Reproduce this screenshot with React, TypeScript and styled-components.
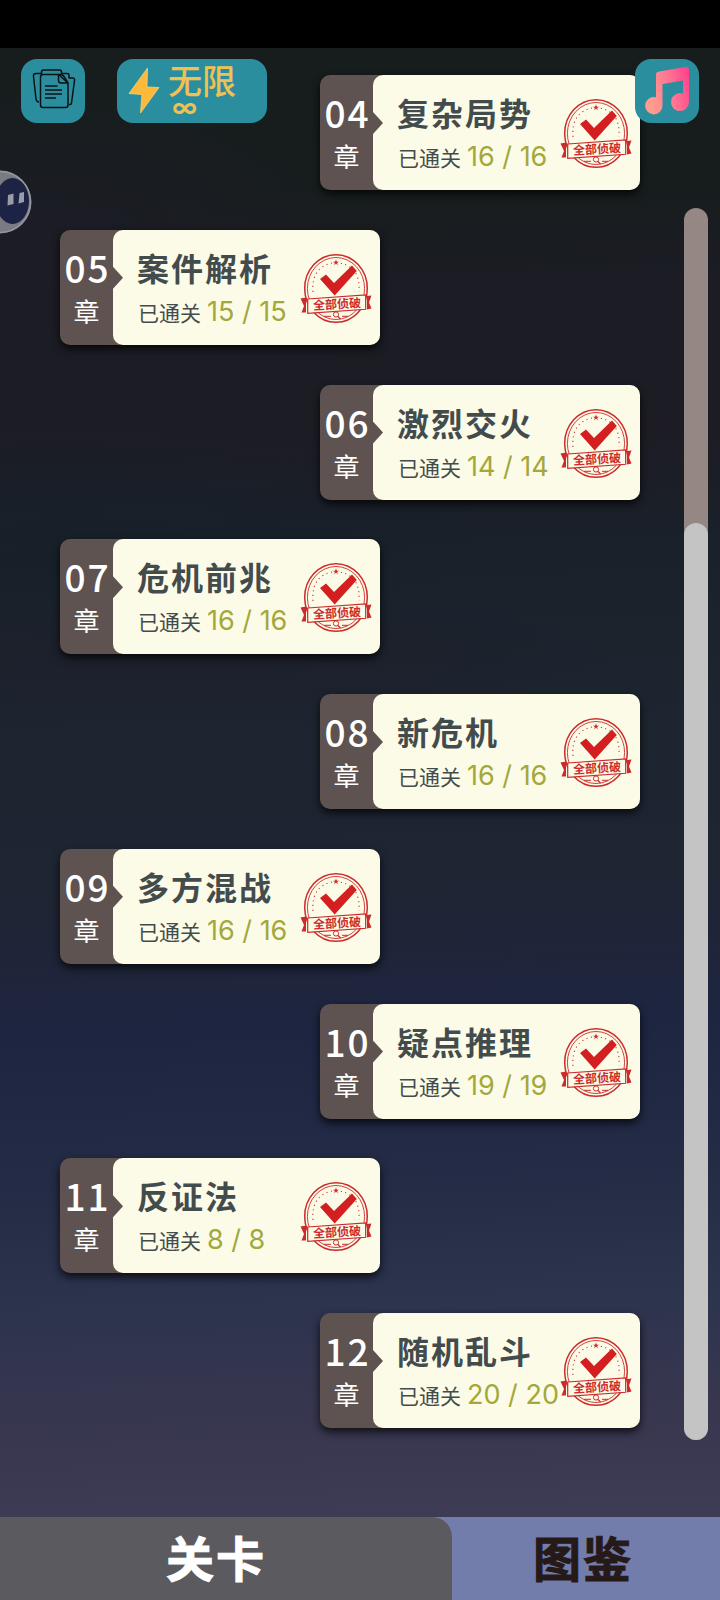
import React from "react";
import styled, { createGlobalStyle } from "styled-components";

const CJK = `"Noto Sans CJK SC", "Noto Sans", sans-serif`;

const GlobalStyle = createGlobalStyle`
  *, *::before, *::after { box-sizing: border-box; }
  html, body { margin: 0; padding: 0; background: #161d1c; }
  button { margin: 0; padding: 0; border: 0; font: inherit; color: inherit; cursor: pointer; }
`;

const Screen = styled.div`
  position: relative;
  display: flex;
  flex-direction: column;
  min-height: 100vh;
  font-family: ${CJK};
  background:
    radial-gradient(ellipse 50% 10% at 5% 14%, rgba(29, 28, 39, 0.8), transparent),
    radial-gradient(ellipse 60% 7% at 10% 33%, rgba(22, 32, 41, 0.8), transparent),
    radial-gradient(ellipse 60% 4% at 25% 41%, rgba(32, 28, 42, 0.5), transparent),
    linear-gradient(
      178deg,
      #161d1c 0%,
      #161d1c 12%,
      #1b1c24 18%,
      #1d1c25 28%,
      #19212a 35%,
      #1d2530 46%,
      #1f2534 56%,
      #1e2541 64%,
      #242c46 74%,
      #2d344e 81%,
      #37364f 87%,
      #3e3b54 94%,
      #3e3b54 100%
    );
`;

const StatusBar = styled.div`
  height: 48px;
  background: #000;
`;

const Toolbar = styled.header`
  position: absolute;
  z-index: 2;
  top: 59px;
  left: 21px;
  right: 21px;
  display: flex;
  gap: 32px;
`;

const ToolButton = styled.button<{ $end?: boolean }>`
  width: 64px;
  height: 64px;
  margin-left: ${(p) => (p.$end ? "auto" : "0")};
  border-radius: 16px;
  background: #2b8e9f;

  svg {
    display: block;
  }
`;

const EnergyButton = styled(ToolButton)`
  display: flex;
  width: 150px;
  color: #f0c053;
`;

const EnergyText = styled.span`
  display: flex;
  flex-direction: column;
  align-items: flex-start;
  padding-left: 2px;
`;

const EnergyLabel = styled.span`
  font-size: 34px;
  font-weight: 500;
  line-height: 42px;
`;

const EnergyValue = styled.span`
  padding-left: 4px;
  font-family: Inter, sans-serif;
  font-size: 26px;
  font-weight: 600;
  line-height: 14px;
`;

const Assistant = styled.button`
  position: absolute;
  z-index: 2;
  top: 170px;
  left: 0;
  width: 32px;
  height: 64px;
  background: none;

  svg {
    display: block;
  }
`;

const Main = styled.main`
  display: flex;
  flex: 1;
  gap: 44px;
  padding: 27px 12px 77px 60px;
`;

const ChapterList = styled.ul`
  display: flex;
  flex: 1;
  flex-direction: column;
  justify-content: space-between;
  gap: 38px;
  margin: 0;
  padding: 0 0 12px;
  list-style: none;
`;

const ChapterItem = styled.li<{ $side: "left" | "right" }>`
  align-self: ${(p) => (p.$side === "left" ? "flex-start" : "flex-end")};
`;

const Card = styled.button`
  display: flex;
  width: 320px;
  height: 115px;
  border-radius: 10px;
  background: #5e5350;
  text-align: left;
  box-shadow: 0 4px 8px rgba(0, 0, 0, 0.75);
`;

const CardTab = styled.span`
  display: flex;
  flex-direction: column;
  align-items: center;
  width: 53px;
  padding-top: 15px;
  color: #fff;
`;

const ChapterNumber = styled.span`
  padding-left: 2px;
  font-size: 37px;
  font-weight: 500;
  line-height: 44px;
  letter-spacing: 2px;
`;

const ChapterUnit = styled.span`
  font-size: 26px;
  line-height: 44px;
`;

const CardBody = styled.span`
  position: relative;
  display: flex;
  flex: 1;
  height: 100%;
  padding: 0 8px 0 24px;
  border-radius: 10px;
  background: #fcfbe7;

  &::before {
    content: "";
    position: absolute;
    top: 37px;
    left: 0;
    width: 10px;
    height: 22px;
    background: #5e5350;
    clip-path: polygon(0 0, 100% 50%, 0 100%);
  }
`;

const Info = styled.span`
  display: flex;
  flex: 1;
  flex-direction: column;
  min-width: 0;
  padding-top: 15px;
  white-space: nowrap;
`;

const Title = styled.span`
  font-size: 32px;
  font-weight: 700;
  line-height: 44px;
  letter-spacing: 2px;
  color: #434c4d;
`;

const Progress = styled.span`
  display: flex;
  align-items: baseline;
  gap: 6px;
  padding-left: 1px;
  font-size: 21px;
  line-height: 46px;
  color: #434c4d;
`;

const Count = styled.span`
  font-family: Inter, sans-serif;
  font-size: 27px;
  color: #a3a83b;
`;

const StampBox = styled.span`
  width: 72px;
  padding-top: 24px;

  svg {
    display: block;
    overflow: visible;
  }
`;

const Track = styled.div`
  display: flex;
  flex-direction: column;
  justify-content: flex-end;
  width: 24px;
  margin-top: 133px;
  border-radius: 12px;
  background: #958783;
`;

const Thumb = styled.div`
  flex: 0 0 74.4%;
  border-radius: 12px;
  background: #c4c4c4;
`;

const Tabs = styled.nav`
  display: grid;
  grid-template-columns: minmax(0, 452fr) minmax(0, 268fr);
  height: 83px;
  background: #737dac;
`;

const Tab = styled.button<{ $active?: boolean }>`
  padding: ${(p) => (p.$active ? "0 20px 6px 0" : "0 6px 6px 0")};
  border-radius: ${(p) => (p.$active ? "0 20px 0 0" : "0")};
  background: ${(p) => (p.$active ? "#5b5a5f" : "transparent")};
  color: ${(p) => (p.$active ? "#fff" : "#261a18")};
  font-size: 48px;
  font-weight: 700;
  line-height: 76px;
  letter-spacing: 2px;
  -webkit-text-stroke: 1px currentColor;
`;

const CasesIcon = () => (
  <svg width="64" height="64" viewBox="0 0 64 64" fill="none" stroke="#0b1214" strokeWidth="1.5" strokeLinejoin="round" aria-hidden="true">
    <path d="M37.5 15.500H22Q19.500 15.500 19.500 18V46Q19.500 48.500 22 48.500H44.500Q47 48.500 47 46V24Z" />
    <path d="M37.500 15.500V21.500Q37.500 24 40 24H47" />
    <path d="M20.500 15V13Q20.500 11 22.500 11H38.500Q40.500 11 40.500 13V14.500H46.500Q48 14.500 48 16.500V19H51.500Q54 19 53.500 21.500L50.500 44Q50 46 48 45.500" />
    <path d="M20 14.500H15Q12 14.500 12.500 17.500L15 40Q15.500 43 18 43" />
    <path d="M37.500 15.500H40Q42 16 43 17.500L47 24" />
    <path d="M24 27H36.500M24 31H41M24 35H41M24 39H35" strokeWidth="1.700" />
  </svg>
);

const BoltIcon = () => (
  <svg width="49" height="64" viewBox="0 0 49 64" aria-hidden="true">
    <path d="M30.500 9L12 34.500L25 35.500L23.500 54L42 28.500L30 28Z" fill="#fdb93a" stroke="#f4d27c" strokeWidth="0.800" />
  </svg>
);

const MusicIcon = () => (
  <svg width="64" height="64" viewBox="0 0 64 64" aria-hidden="true">
    <defs>
      <linearGradient id="note" x1="0" y1="0.300" x2="1" y2="0">
        <stop offset="0" stopColor="#ff9c8c" />
        <stop offset="0.450" stopColor="#ff7a92" />
        <stop offset="1" stopColor="#ff3d8c" />
      </linearGradient>
    </defs>
    <path
      fill="url(#note)"
      d="M21 15.500Q21 13 24 12.400L50.500 8.100Q54 7.500 54 11V42.500A9 9 0 1 1 48 34.500V21.500L27.500 25V46.500A8.700 8.700 0 1 1 21 38.300Z"
    />
  </svg>
);

const AssistantIcon = () => (
  <svg width="32" height="64" viewBox="0 0 32 64" aria-hidden="true">
    <circle cx="0" cy="32" r="31.500" fill="#7a7a83" />
    <circle cx="0" cy="32" r="30.500" fill="none" stroke="#96969e" strokeWidth="1.500" />
    <ellipse cx="12.500" cy="31" rx="16.500" ry="23" fill="#1c2344" />
    <path d="M8 25L13.500 23.500V34L7.500 35.500ZM19.500 23L24 22V32L18.500 33.500Z" fill="#9a9ca8" />
  </svg>
);

const STAMP_RED = "#cb2b2b";

const Stamp = () => (
  <svg width="72" height="70" viewBox="0 0 72 70" role="img" aria-label="全部侦破">
    <ellipse cx="36" cy="34.500" rx="31.300" ry="33.800" fill="none" stroke={STAMP_RED} strokeWidth="1.500" />
    <ellipse cx="36" cy="34.500" rx="28.600" ry="31" fill="none" stroke={STAMP_RED} strokeWidth="0.900" />
    <path
      d="M13 38Q11 11 36 8.500Q61 11 59 38"
      fill="none"
      stroke={STAMP_RED}
      strokeWidth="1.100"
      strokeDasharray="1.100 3.600"
    />
    <path d="M36 5L37 7.500H39.500L37.500 9L38.200 11.500L36 10L33.800 11.500L34.500 9L32.500 7.500H35Z" fill={STAMP_RED} stroke="#fcfbe7" strokeWidth="0.500" />
    <path d="M20 25L26 20.500L34 29L52 11.500L56.800 17L34.700 41.500Z" fill="#d31f20" />
    <path d="M0.500 44.500L6 43.500V58.500H1.500L4 52ZM67 42L71.500 41.500L69 48.500L71.500 54.500L67 55.500Z" fill={STAMP_RED} />
    <path d="M7.700 45L65.700 40.800V55.300L7.700 59.300Z" fill="#fcfbe7" stroke={STAMP_RED} strokeWidth="1.200" />
    <text
      x="37"
      y="54.500"
      transform="rotate(-3 36 50)"
      textAnchor="middle"
      fontFamily={CJK}
      fontSize="12"
      fontWeight="700"
      fill={STAMP_RED}
    >
      全部侦破
    </text>
    <path d="M24 62.300H31M42 62.300H48" stroke={STAMP_RED} strokeWidth="1" />
    <circle cx="36" cy="60.500" r="2.600" fill="#fcfbe7" stroke={STAMP_RED} strokeWidth="1" />
    <path d="M38 62.500L40.500 65" stroke={STAMP_RED} strokeWidth="1.300" />
  </svg>
);

const chapters = [
  { no: "04", title: "复杂局势", total: 16 },
  { no: "05", title: "案件解析", total: 15 },
  { no: "06", title: "激烈交火", total: 14 },
  { no: "07", title: "危机前兆", total: 16 },
  { no: "08", title: "新危机", total: 16 },
  { no: "09", title: "多方混战", total: 16 },
  { no: "10", title: "疑点推理", total: 19 },
  { no: "11", title: "反证法", total: 8 },
  { no: "12", title: "随机乱斗", total: 20 },
];

export default function App() {
  return (
    <Screen lang="zh-CN">
      <GlobalStyle />
      <StatusBar />
      <Toolbar>
        <ToolButton type="button" aria-label="案卷">
          <CasesIcon />
        </ToolButton>
        <EnergyButton type="button">
          <BoltIcon />
          <EnergyText>
            <EnergyLabel>无限</EnergyLabel>
            <EnergyValue>∞</EnergyValue>
          </EnergyText>
        </EnergyButton>
        <ToolButton type="button" $end aria-label="音乐">
          <MusicIcon />
        </ToolButton>
      </Toolbar>
      <Assistant type="button" aria-label="助手">
        <AssistantIcon />
      </Assistant>
      <Main>
        <ChapterList>
          {chapters.map((c, i) => (
            <ChapterItem key={c.no} $side={i % 2 ? "left" : "right"}>
              <Card type="button">
                <CardTab>
                  <ChapterNumber>{c.no}</ChapterNumber>
                  <ChapterUnit>章</ChapterUnit>
                </CardTab>
                <CardBody>
                  <Info>
                    <Title>{c.title}</Title>
                    <Progress>
                      已通关
                      <Count>{`${c.total} / ${c.total}`}</Count>
                    </Progress>
                  </Info>
                  <StampBox>
                    <Stamp />
                  </StampBox>
                </CardBody>
              </Card>
            </ChapterItem>
          ))}
        </ChapterList>
        <Track>
          <Thumb />
        </Track>
      </Main>
      <Tabs>
        <Tab type="button" $active>
          关卡
        </Tab>
        <Tab type="button">图鉴</Tab>
      </Tabs>
    </Screen>
  );
}
